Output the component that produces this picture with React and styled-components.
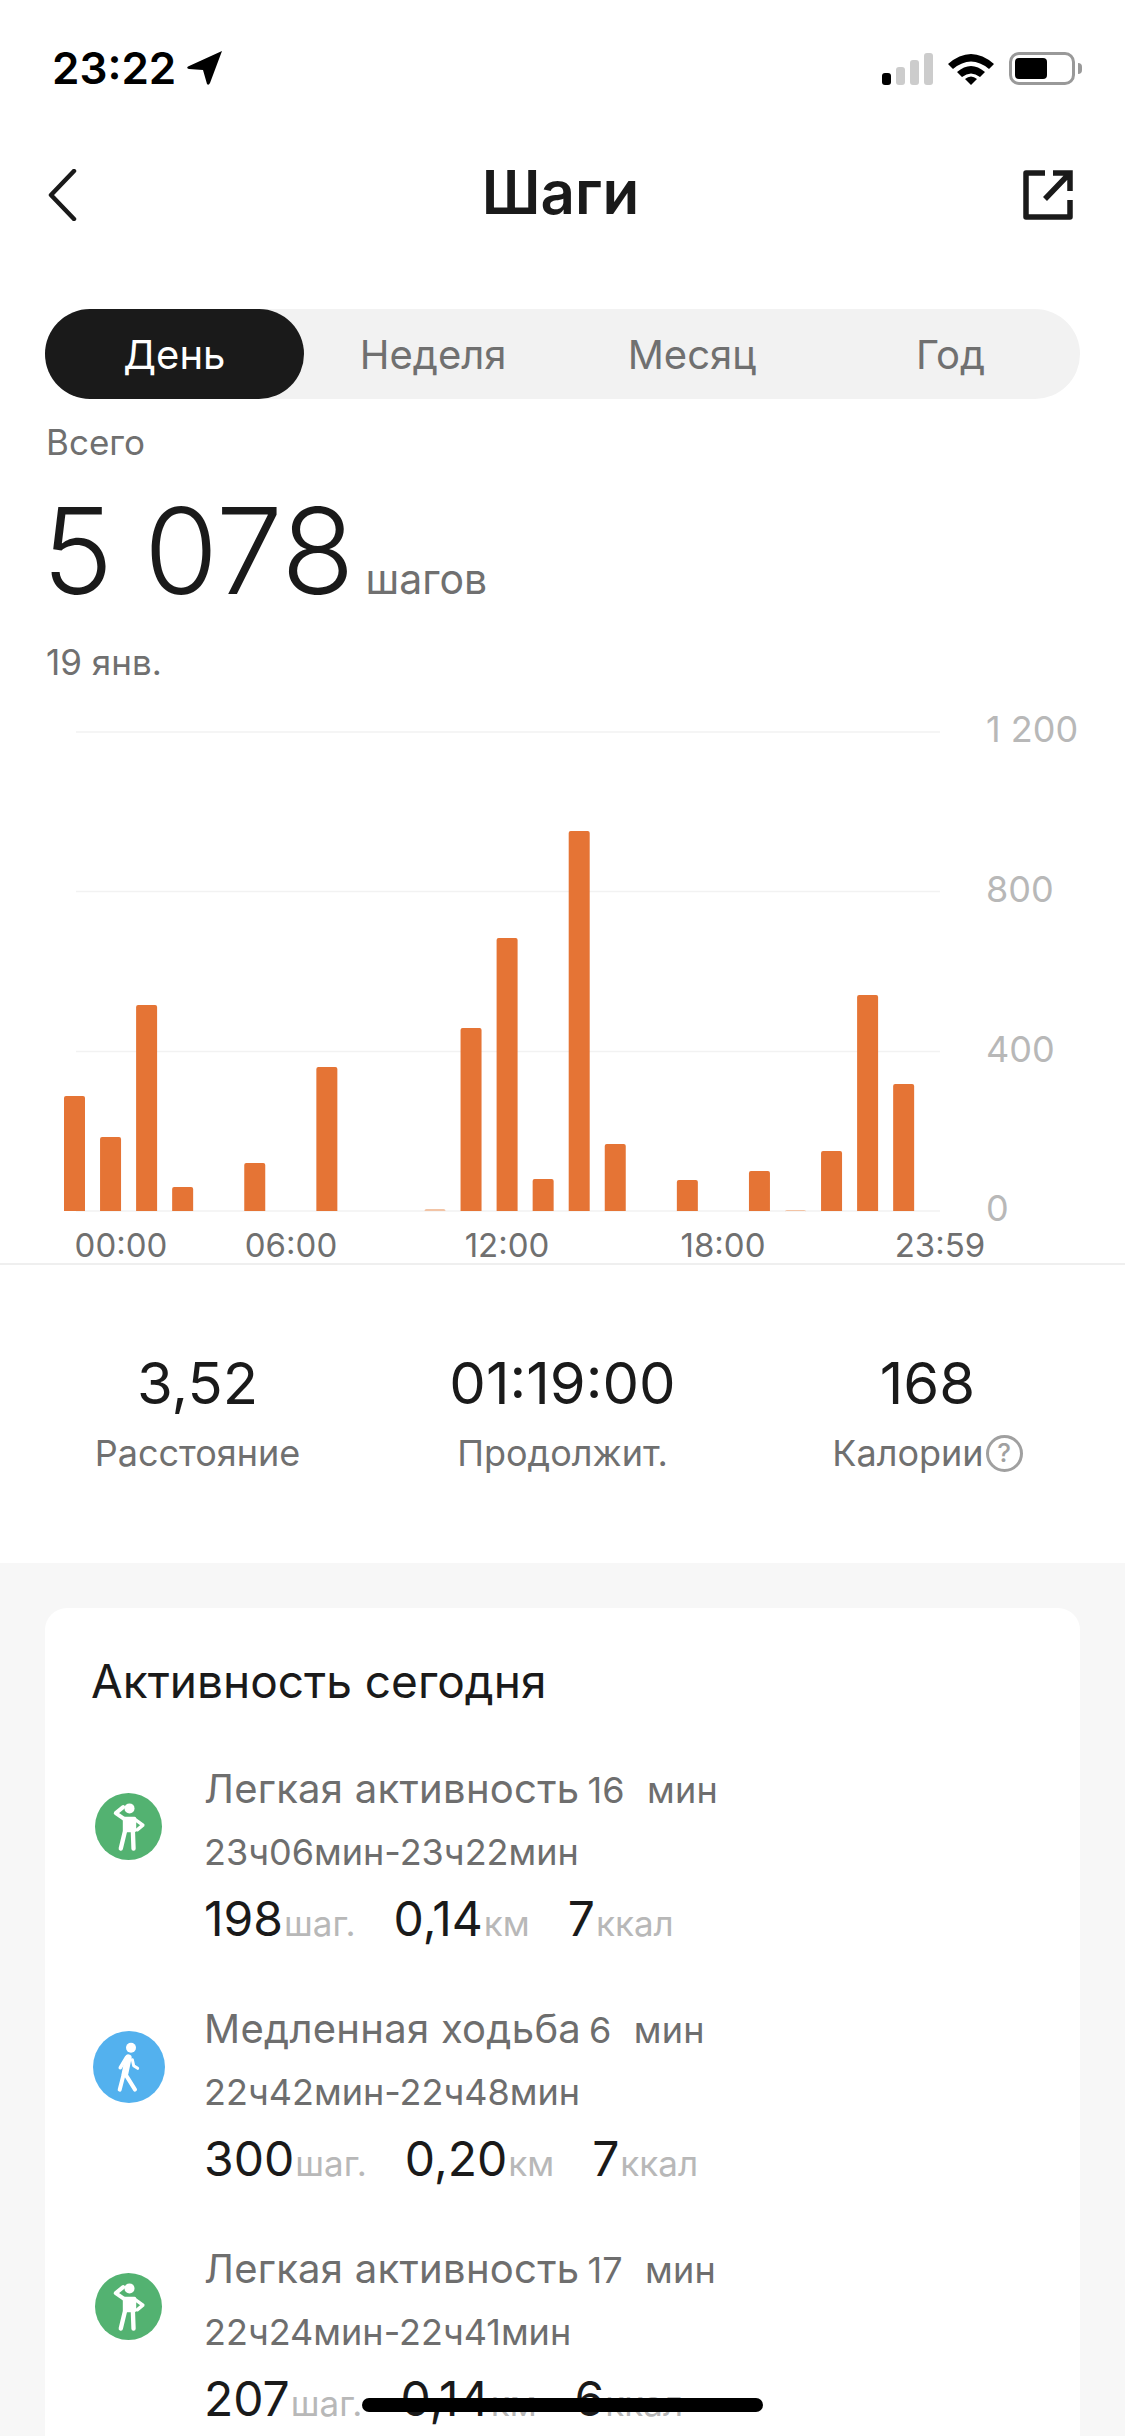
import React from "react";
import styled, { createGlobalStyle } from "styled-components";

const GlobalStyle = createGlobalStyle`
  html, body {
    margin: 0;
    padding: 0;
    background: #fff;
  }
  body {
    font-family: Inter, "Noto Sans", "Liberation Sans", sans-serif;
    color: #1a1a1a;
  }
`;

const tabs = ["День", "Неделя", "Месяц", "Год"];

// x = hour slot, h = bar height in px
const bars = [
  [0, 115], [1, 74], [2, 206], [3, 24], [5, 48], [7, 144], [10, 2], [11, 183], [12, 273],
  [13, 32], [14, 380], [15, 67], [17, 31], [19, 40], [20, 1], [21, 60], [22, 216], [23, 127],
];

const yTicks = [
  ["1 200", 32],
  ["800", 191.5],
  ["400", 351.5],
  ["0", 511],
];

const xTicks = [
  ["00:00", 121],
  ["06:00", 291],
  ["12:00", 507],
  ["18:00", 723],
  ["23:59", 940],
];

const activities = [
  { kind: "light", name: "Легкая активность", mins: "16", range: "23ч06мин-23ч22мин", steps: "198", km: "0,14", kcal: "7" },
  { kind: "slow", name: "Медленная ходьба", mins: "6", range: "22ч42мин-22ч48мин", steps: "300", km: "0,20", kcal: "7" },
  { kind: "light", name: "Легкая активность", mins: "17", range: "22ч24мин-22ч41мин", steps: "207", km: "0,14", kcal: "6" },
];

const LightIcon = () => (
  <FigureSvg $size={67} viewBox="0 0 200 200">
    <circle cx="100" cy="100" r="100" fill="#53b271" />
    <circle cx="103" cy="46" r="15" fill="#fff" />
    <g fill="none" stroke="#fff" strokeLinecap="round" strokeLinejoin="round">
      <path d="M88 78 L62 60 L84 42" strokeWidth="12" />
      <path d="M118 78 L143 96 L126 110" strokeWidth="10" />
      <path d="M88 76 H118 V112 H88 Z" strokeWidth="10" fill="#fff" />
      <path d="M90 112 L77 166" strokeWidth="13" />
      <path d="M113 112 L115 166" strokeWidth="13" />
    </g>
  </FigureSvg>
);

const SlowIcon = () => (
  <FigureSvg $size={72} viewBox="0 0 216 216">
    <circle cx="108" cy="108" r="108" fill="#53b1ee" />
    <circle cx="114" cy="50" r="15" fill="#fff" />
    <g fill="none" stroke="#fff" strokeLinecap="round" strokeLinejoin="round">
      <path d="M106 80 L96 128" strokeWidth="20" />
      <path d="M100 80 L82 110" strokeWidth="11" />
      <path d="M118 86 L122 104 L134 112" strokeWidth="9" />
      <path d="M92 130 L80 176" strokeWidth="12" />
      <path d="M96 128 L126 176" strokeWidth="12" />
    </g>
  </FigureSvg>
);

const App = () => {
  return (
    <>
      <GlobalStyle />
      <Page>
        <StatusBar>
          <Clock>
            23:22
            <svg width="38" height="36" viewBox="0 0 38 36">
              <path d="M36 1 L2 16.5 Q0 18 3 19 L17 20 L21 34 Q22.5 36 24 33 Z" fill="#000" />
            </svg>
          </Clock>
          <StatusIcons>
            <Signal>
              <SignalBar $h={12} $on />
              <SignalBar $h={18} />
              <SignalBar $h={25} />
              <SignalBar $h={32} />
            </Signal>
            <svg width="46" height="33" viewBox="0 0 46 33">
              <path d="M0 12 Q23 -8 46 12 L41 17 Q23 2 5 17 Z" fill="#000" />
              <path d="M9 20 Q23 8 37 20 L32 25 Q23 18 14 25 Z" fill="#000" />
              <path d="M17 27 Q23 22 29 27 L23 33 Z" fill="#000" />
            </svg>
            <Battery>
              <BatteryLevel />
            </Battery>
          </StatusIcons>
        </StatusBar>

        <NavBar>
          <svg width="30" height="52" viewBox="0 0 30 52">
            <path d="M27 2 L4 26 L27 50" fill="none" stroke="#1a1a1a" strokeWidth="4.5" strokeLinecap="round" strokeLinejoin="round" />
          </svg>
          <Title>Шаги</Title>
          <ShareIcon width="52" height="52" viewBox="0 0 52 52">
            <path d="M23 4 H4 V48 H48 V31" fill="none" stroke="#1a1a1a" strokeWidth="5.5" strokeLinejoin="round" />
            <path d="M48 22 V4 H31 M47 5 L23 30" fill="none" stroke="#1a1a1a" strokeWidth="5.5" />
          </ShareIcon>
        </NavBar>

        <Tabs>
          {tabs.map((t, i) => (
            <Tab key={t} $active={i === 0}>{t}</Tab>
          ))}
        </Tabs>

        <Summary>
          <SmallLabel>Всего</SmallLabel>
          <Total>
            <TotalValue>5 078</TotalValue>
            <TotalUnit>шагов</TotalUnit>
          </Total>
          <DateLabel>19 янв.</DateLabel>
        </Summary>

        <Chart width="1125" height="572" viewBox="0 0 1125 572">
          {yTicks.map(([label, y]) => (
            <g key={label}>
              <line x1="76" x2="940" y1={y} y2={y} stroke="#f2f2f2" strokeWidth="1.5" />
              <AxisText x="986" y={y + 10}>{label}</AxisText>
            </g>
          ))}
          {bars.map(([slot, h]) => (
            <path
              key={slot}
              d={`M${64 + slot * 36.05} 511 V${511 - h + 2} q0 -2 2 -2 h17 q2 0 2 2 V511 Z`}
              fill={h < 3 ? "#f2c4a6" : "#e57435"}
            />
          ))}
          {xTicks.map(([label, x]) => (
            <TimeText key={label} x={x} y="557" textAnchor="middle">{label}</TimeText>
          ))}
          <line x1="0" x2="1125" y1="564" y2="564" stroke="#efefef" strokeWidth="2" />
        </Chart>

        <Stats>
          <Stat>
            <StatValue>3,52</StatValue>
            <StatLabel>Расстояние</StatLabel>
          </Stat>
          <Stat>
            <StatValue>01:19:00</StatValue>
            <StatLabel>Продолжит.</StatLabel>
          </Stat>
          <Stat>
            <StatValue>168</StatValue>
            <StatLabel>
              Калории
              <HelpMark>?</HelpMark>
            </StatLabel>
          </Stat>
        </Stats>

        <GraySection>
          <Card>
            <CardTitle>Активность сегодня</CardTitle>
            {activities.map((a, i) => (
              <Row key={i}>
                <IconSlot>{a.kind === "light" ? <LightIcon /> : <SlowIcon />}</IconSlot>
                <RowBody>
                  <RowTitle>
                    {a.name}
                    <Mins>{a.mins}</Mins>
                    <MinUnit>мин</MinUnit>
                  </RowTitle>
                  <RowRange>{a.range}</RowRange>
                  <Metrics>
                    <Metric>{a.steps}<Unit>шаг.</Unit></Metric>
                    <Metric>{a.km}<Unit>км</Unit></Metric>
                    <Metric>{a.kcal}<Unit>ккал</Unit></Metric>
                  </Metrics>
                </RowBody>
              </Row>
            ))}
          </Card>
        </GraySection>

        <HomeIndicator />
      </Page>
    </>
  );
};

const Page = styled.div`
  position: relative;
  width: 1125px;
  height: 2436px;
  overflow: hidden;
  background: #fff;
  display: flex;
  flex-direction: column;
`;

const StatusBar = styled.div`
  height: 112px;
  box-sizing: border-box;
  padding: 46px 43px 0 52px;
  display: flex;
  justify-content: space-between;
  align-items: flex-start;
`;

const Clock = styled.div`
  display: flex;
  align-items: center;
  gap: 10px;
  height: 44px;
  font-size: 44px;
  font-weight: 600;
  color: #000;
`;

const StatusIcons = styled.div`
  display: flex;
  align-items: flex-end;
  gap: 15px;
  margin-top: 6px;
`;

const Signal = styled.div`
  display: flex;
  align-items: flex-end;
  gap: 5px;
`;

const SignalBar = styled.span`
  width: 9px;
  height: ${(p) => p.$h}px;
  border-radius: 3px;
  background: ${(p) => (p.$on ? "#000" : "#cccccc")};
`;

const Battery = styled.div`
  position: relative;
  width: 66px;
  height: 33px;
  box-sizing: border-box;
  border: 3px solid #999;
  border-radius: 10px;
  padding: 3px;
  margin-right: 7px;

  &::after {
    content: "";
    position: absolute;
    right: -10px;
    top: 8px;
    width: 4px;
    height: 11px;
    border-radius: 0 4px 4px 0;
    background: #999;
  }
`;

const BatteryLevel = styled.div`
  width: 32px;
  height: 21px;
  border-radius: 4px;
  background: #000;
`;

const NavBar = styled.div`
  height: 110px;
  margin-top: 28px;
  padding: 0 51px 0 47px;
  display: grid;
  grid-template-columns: 1fr auto 1fr;
  align-items: center;
`;

const ShareIcon = styled.svg`
  justify-self: end;
`;

const Title = styled.h1`
  margin: 0 0 6px;
  font-size: 60px;
  font-weight: 600;
  color: #1a1a1a;
`;

const Tabs = styled.div`
  margin: 59px 45px 0;
  height: 90px;
  border-radius: 45px;
  background: #f2f2f2;
  display: grid;
  grid-template-columns: repeat(4, 1fr);
`;

const Tab = styled.div`
  display: flex;
  align-items: center;
  justify-content: center;
  border-radius: 45px;
  font-size: 40px;
  color: ${(p) => (p.$active ? "#fff" : "#707070")};
  background: ${(p) => (p.$active ? "#1a1a1a" : "transparent")};
`;

const Summary = styled.div`
  padding: 23px 46px 0;
`;

const SmallLabel = styled.div`
  font-size: 35px;
  line-height: 40px;
  color: #707070;
`;

const Total = styled.div`
  margin-top: 28px;
  display: flex;
  align-items: baseline;
  gap: 11px;
  height: 122px;
  line-height: 122px;
`;

const TotalValue = styled.span`
  margin-left: -4px;
  font-size: 120px;
  font-weight: 300;
  word-spacing: -3px;
  color: #1a1a1a;
`;

const TotalUnit = styled.span`
  font-size: 41px;
  color: #707070;
`;

const DateLabel = styled(SmallLabel)`
  margin-top: 30px;
`;

const Chart = styled.svg`
  display: block;
  flex: none;
  margin-top: 18px;
`;

const AxisText = styled.text`
  font-size: 36px;
  fill: #b8b8b8;
`;

const TimeText = styled.text`
  font-size: 33px;
  fill: #707070;
`;

const Stats = styled.div`
  height: 291px;
  box-sizing: border-box;
  padding-top: 76px;
  display: grid;
  grid-template-columns: repeat(3, 365px);
  justify-content: center;
`;

const Stat = styled.div`
  display: flex;
  flex-direction: column;
  align-items: center;
`;

const StatValue = styled.div`
  font-size: 58px;
  line-height: 70px;
  color: #1a1a1a;
`;

const StatLabel = styled.div`
  display: flex;
  align-items: center;
  margin-top: 13px;
  font-size: 36px;
  line-height: 44px;
  color: #707070;
`;

const HelpMark = styled.span`
  width: 37px;
  height: 37px;
  box-sizing: border-box;
  margin-left: 2px;
  border: 3px solid #a0a0a0;
  border-radius: 50%;
  display: flex;
  align-items: center;
  justify-content: center;
  font-size: 26px;
  font-weight: 500;
  line-height: 1;
  color: #a0a0a0;
`;

const GraySection = styled.div`
  flex: 1;
  min-height: 0;
  background: #f7f7f7;
  padding: 45px 45px 0;
`;

const Card = styled.div`
  height: 100%;
  box-sizing: border-box;
  background: #fff;
  border-radius: 22px 22px 0 0;
  padding: 46px 46px 0;
`;

const CardTitle = styled.div`
  font-size: 46px;
  line-height: 54px;
  color: #1a1a1a;
  margin-bottom: 56px;
`;

const Row = styled.div`
  display: flex;
  gap: 38px;
  height: 240px;
`;

const IconSlot = styled.div`
  flex: none;
  width: 75px;
  height: 67px;
  margin-top: 29px;
  display: flex;
  justify-content: center;
  align-items: center;
`;

const FigureSvg = styled.svg`
  display: block;
  flex: none;
  width: ${(p) => p.$size}px;
  height: ${(p) => p.$size}px;
`;

const RowBody = styled.div`
  display: flex;
  flex-direction: column;
`;

const RowTitle = styled.div`
  display: flex;
  align-items: baseline;
  font-size: 40px;
  line-height: 50px;
  letter-spacing: 0.28px;
  color: #6e6e6e;
`;

const Mins = styled.span`
  margin-left: 8px;
  font-size: 36px;
`;

const MinUnit = styled.span`
  margin-left: 22px;
  font-size: 36px;
`;

const RowRange = styled.div`
  margin-top: 12px;
  font-size: 36px;
  line-height: 50px;
  color: #6e6e6e;
`;

const Metrics = styled.div`
  display: flex;
  align-items: baseline;
  gap: 38px;
  margin-top: 12px;
`;

const Metric = styled.div`
  font-size: 48px;
  line-height: 60px;
  color: #1a1a1a;
`;

const Unit = styled.span`
  margin-left: 1px;
  font-size: 35px;
  color: #b8b8b8;
`;

const HomeIndicator = styled.div`
  position: absolute;
  left: 362px;
  bottom: 24px;
  width: 401px;
  height: 14px;
  border-radius: 7px;
  background: #000;
`;

export default App;
